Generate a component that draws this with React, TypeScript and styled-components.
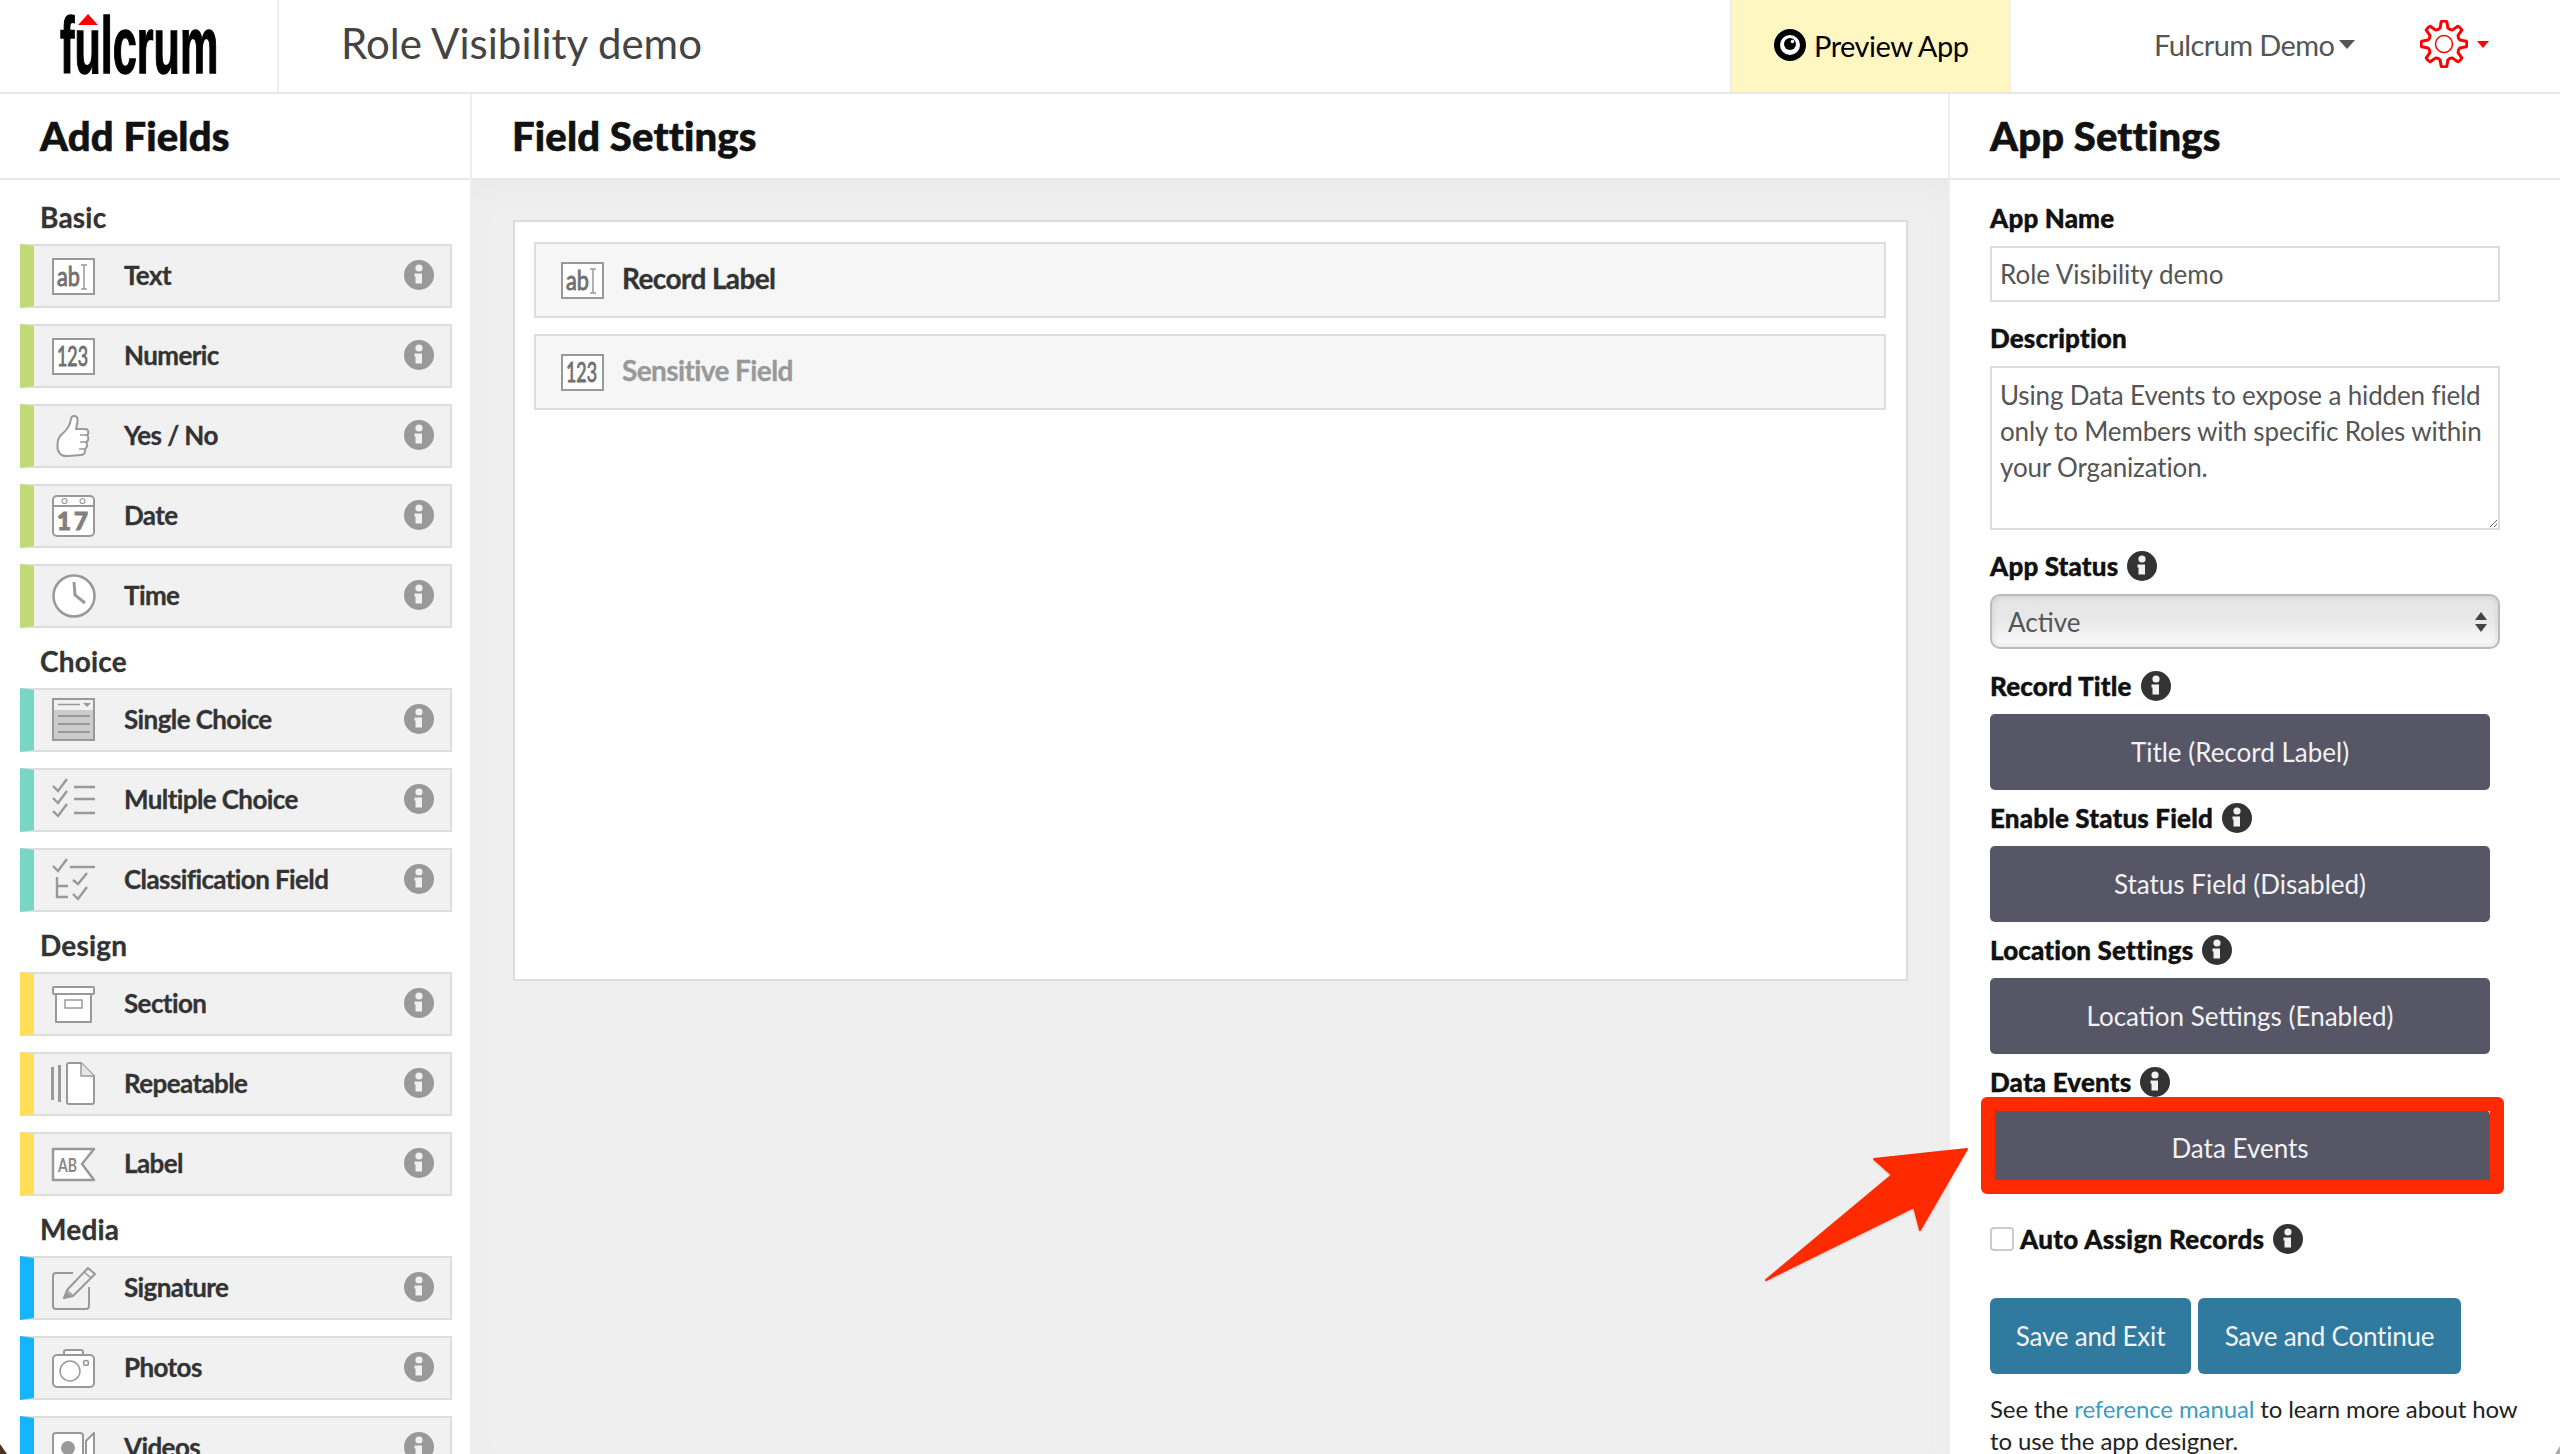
import React from 'react';
import styled, { createGlobalStyle } from 'styled-components';

const GlobalStyle = createGlobalStyle`
  html, body {
    margin: 0;
    height: 100%;
    overflow: hidden;
    background: #fff;
    font-family: Lato, "Open Sans", sans-serif;
    color: #333;
  }
  * { box-sizing: border-box; }
`;

const GRAY = '#999';

const boxed = (children: React.ReactNode) => (
  <>
    <rect x="1" y="5" width="41" height="35" fill="#fff" stroke={GRAY} strokeWidth="2" />
    {children}
  </>
);

const narrowText = {
  fontFamily: 'Lato, sans-serif',
  lengthAdjust: 'spacingAndGlyphs' as const,
  fill: '#707070',
  stroke: '#707070',
  strokeWidth: 0.9,
};

const icons: Record<string, React.ReactNode> = {
  text: boxed(
    <>
      <text x="5" y="32" fontSize="27" textLength="23" {...narrowText}>ab</text>
      <path d="M32 11v24M29 11h6M29 35h6" fill="none" stroke={GRAY} strokeWidth="1.5" />
    </>,
  ),
  numeric: boxed(
    <text x="5" y="32" fontSize="26" textLength="31" {...narrowText}>123</text>,
  ),
  yesno: (
    <g fill="#fff" stroke={GRAY} strokeWidth="2" strokeLinejoin="round">
      <path d="M9 21C14 17 18 13 19 5C19.5 1 25 1 25.5 5C26 10 24 13 24 15L33 15C37 15 37 20 35 21C37 23 37 27 34 28C36 30 35 34 33 35C34 38 32 41 29 41L16 42C8 43 5 37 5.5 31C5.5 27 6 24 9 21Z" />
      <path d="M28 21h7M28 28h6M27 35h6" fill="none" strokeWidth="1.5" />
    </g>
  ),
  date: (
    <>
      <rect x="1" y="2" width="41" height="40" rx="4" fill="#fff" stroke={GRAY} strokeWidth="2" />
      <path d="M1 12h41" stroke={GRAY} strokeWidth="2" />
      <circle cx="12.5" cy="7" r="2.5" fill="none" stroke={GRAY} strokeWidth="1.2" />
      <circle cx="30.5" cy="7" r="2.5" fill="none" stroke={GRAY} strokeWidth="1.2" />
      <text x="22" y="36" fontSize="24" fontWeight="900" textAnchor="middle" fontFamily="Lato, sans-serif" fill="#808080" stroke="#808080" strokeWidth="1" letterSpacing="3">17</text>
    </>
  ),
  time: (
    <>
      <circle cx="22" cy="22" r="20.5" fill="#fff" stroke={GRAY} strokeWidth="2.5" />
      <path d="M22 8L23 21L33 29" fill="none" stroke={GRAY} strokeWidth="3" />
    </>
  ),
  single: (
    <>
      <rect x="1" y="1" width="41" height="41" fill="#ccc" stroke={GRAY} strokeWidth="2" />
      <rect x="2" y="2" width="39" height="10" fill="#f1f1f1" />
      <path d="M6 6.5h22" stroke={GRAY} strokeWidth="1.5" />
      <path d="M31 5h8l-4 4z" fill={GRAY} />
      <path d="M6 18h32M6 26h32M6 34h32" stroke="#888" strokeWidth="1.5" />
    </>
  ),
  multiple: (
    <g fill="none" stroke={GRAY} strokeWidth="2.4">
      <path d="M1 8l5 5 9-12M1 20l5 5 9-12M1 33l5 5 9-12" />
      <path d="M22 9h21M22 21h21M22 35h21" />
    </g>
  ),
  classification: (
    <g fill="none" stroke={GRAY} strokeWidth="2.4">
      <path d="M1 8l5 5 9-12" />
      <path d="M18 9h25" />
      <path d="M5 19v20h11M5 28h11" />
      <path d="M21 22l5 4 9-11M21 36l5 5 9-12" />
    </g>
  ),
  section: (
    <g fill="#fff" stroke={GRAY} strokeWidth="2" strokeLinejoin="round">
      <rect x="4" y="12" width="35" height="28" />
      <rect x="1" y="5" width="41" height="7" rx="1" />
      <rect x="13" y="18" width="17" height="8" fill="none" strokeWidth="1.5" />
    </g>
  ),
  repeatable: (
    <g stroke={GRAY} strokeWidth="2" strokeLinejoin="round">
      <path d="M0.5 5v33" fill="none" strokeWidth="3" />
      <path d="M7.5 3v37" fill="none" strokeWidth="3" />
      <path d="M15 3a2 2 0 0 1 2-2h12l13 13v26a2 2 0 0 1-2 2H17a2 2 0 0 1-2-2z" fill="#fff" />
      <path d="M29 1v13h13" fill="#e6e6e6" strokeWidth="1.5" />
    </g>
  ),
  label: (
    <>
      <path d="M1 7H42L30 22L42 38H1Z" fill="#fff" stroke={GRAY} strokeWidth="2.5" strokeLinejoin="round" />
      <text x="6" y="30" fontSize="19" fontWeight="700" textLength="19" {...narrowText} fill="#888" strokeWidth="0">AB</text>
    </>
  ),
  signature: (
    <g fill="none" stroke={GRAY} strokeWidth="2" strokeLinejoin="round">
      <path d="M21 7H4a3 3 0 0 0-3 3v30a3 3 0 0 0 3 3h30a3 3 0 0 0 3-3V21" />
      <path d="M12 32L15 24L36 2L43 8L21 30Z" fill="#f1f1f1" />
      <path d="M32 6L39 12M15 24L21 30" strokeWidth="1.5" />
      <path d="M12 32L15 27L18 30Z" fill={GRAY} />
    </g>
  ),
  photos: (
    <g fill="#fff" stroke={GRAY} strokeWidth="2" strokeLinejoin="round">
      <path d="M12 9V6a2 2 0 0 1 2-2h15a2 2 0 0 1 2 2v3" />
      <rect x="1" y="9" width="41" height="32" rx="4" />
      <circle cx="18" cy="25" r="10" strokeWidth="1.5" />
      <circle cx="34" cy="17" r="2.5" strokeWidth="1.5" />
    </g>
  ),
  videos: (
    <g stroke={GRAY} strokeWidth="2" strokeLinejoin="round">
      <rect x="1" y="7" width="30" height="30" rx="3" fill="#fff" />
      <path d="M34 15L42 7V37L34 29Z" fill="#fff" />
      <circle cx="16" cy="22" r="6" fill={GRAY} />
    </g>
  ),
};

function FieldIcon({ name }: { name: string }) {
  return (
    <IconSvg viewBox="0 0 44 44">{icons[name]}</IconSvg>
  );
}

function InfoIcon({ dark }: { dark?: boolean }) {
  return (
    <InfoSvg viewBox="0 0 30 30">
      <circle cx="15" cy="15" r="15" fill={dark ? '#333' : '#999'} />
      <circle cx="15" cy="8" r="3.6" fill="#f1f1f1" />
      <path d="M10.5 13.500h7.500v10h-6.500v-7h-1z" fill="#f1f1f1" />
    </InfoSvg>
  );
}

// 8 tooth outline for the settings cog
const gearPath = (() => {
  const pts: string[] = [];
  const teeth = 8;
  for (let i = 0; i < teeth; i++) {
    const a = (i / teeth) * Math.PI * 2 - Math.PI / 2;
    const step = (Math.PI * 2) / teeth;
    const at = (r: number, t: number) =>
      `${(24 + Math.cos(a + t) * r).toFixed(1)} ${(24 + Math.sin(a + t) * r).toFixed(1)}`;
    pts.push(`${i === 0 ? 'M' : 'L'}${at(16.5, -step * 0.3)}`);
    pts.push(`L${at(22.5, -step * 0.16)}`);
    pts.push(`Q${at(23.5, 0)} ${at(22.5, step * 0.16)}`);
    pts.push(`L${at(16.5, step * 0.3)}`);
    pts.push(`Q${at(15, step * 0.5)} ${at(16.5, step * 0.7)}`);
  }
  return pts.join(' ') + ' Z';
})();

const groups = [
  {
    title: 'Basic',
    color: '#c0db75',
    items: [
      ['text', 'Text'],
      ['numeric', 'Numeric'],
      ['yesno', 'Yes / No'],
      ['date', 'Date'],
      ['time', 'Time'],
    ],
  },
  {
    title: 'Choice',
    color: '#76d7c4',
    items: [
      ['single', 'Single Choice'],
      ['multiple', 'Multiple Choice'],
      ['classification', 'Classification Field'],
    ],
  },
  {
    title: 'Design',
    color: '#ffdf57',
    items: [
      ['section', 'Section'],
      ['repeatable', 'Repeatable'],
      ['label', 'Label'],
    ],
  },
  {
    title: 'Media',
    color: '#14b4ff',
    items: [
      ['signature', 'Signature'],
      ['photos', 'Photos'],
      ['videos', 'Videos'],
    ],
  },
];

export default function App() {
  return (
    <Page>
      <GlobalStyle />
      <TopBar>
        <LogoCell>
          <Logo>
            <LogoWord>fulcrum</LogoWord>
            <LogoCaret viewBox="0 0 20 11">
              <path d="M10 0L20 11H0Z" fill="#f00" />
            </LogoCaret>
          </Logo>
        </LogoCell>
        <AppTitle>Role Visibility demo</AppTitle>
        <PreviewCell>
          <svg width="32" height="32" viewBox="0 0 32 32">
            <circle cx="16" cy="16" r="13" fill="#fff" stroke="#000" strokeWidth="6" />
            <circle cx="16" cy="15" r="6" fill="#000" />
            <circle cx="18.500" cy="12.500" r="1.800" fill="#fff" />
          </svg>
          Preview App
        </PreviewCell>
        <UserName>
          Fulcrum Demo
          <Caret $size={8} $color="#555" />
        </UserName>
        <GearCell>
          <svg width="48" height="48" viewBox="0 0 48 48">
            <path d={gearPath} fill="none" stroke="#f00" strokeWidth="3" strokeLinejoin="round" />
            <circle cx="24" cy="24" r="8.500" fill="none" stroke="#f00" strokeWidth="1.500" />
          </svg>
          <Caret $size={6} $color="#f00" />
        </GearCell>
      </TopBar>

      <Columns>
        <Sidebar>
          <PanelHeader>Add Fields</PanelHeader>
          <SidebarBody>
            {groups.map((group) => (
              <div key={group.title}>
                <GroupTitle>{group.title}</GroupTitle>
                {group.items.map(([icon, label]) => (
                  <FieldRow key={label} $color={group.color}>
                    <FieldIcon name={icon} />
                    <FieldName>{label}</FieldName>
                    <InfoSlot>
                      <InfoIcon />
                    </InfoSlot>
                  </FieldRow>
                ))}
              </div>
            ))}
          </SidebarBody>
        </Sidebar>

        <Center>
          <PanelHeader>Field Settings</PanelHeader>
          <Canvas>
            <FormCard>
              <CardRow>
                <FieldIcon name="text" />
                <CardRowName>Record Label</CardRowName>
              </CardRow>
              <CardRow>
                <FieldIcon name="numeric" />
                <CardRowName $muted>Sensitive Field</CardRowName>
              </CardRow>
            </FormCard>
          </Canvas>
        </Center>

        <Settings>
          <PanelHeader>App Settings</PanelHeader>
          <SettingsBody>
            <SettingLabel>App Name</SettingLabel>
            <TextInput defaultValue="Role Visibility demo" />
            <SettingLabel>Description</SettingLabel>
            <TextArea defaultValue="Using Data Events to expose a hidden field only to Members with specific Roles within your Organization." />
            <SettingLabel>
              App Status <InfoIcon dark />
            </SettingLabel>
            <SelectWrap>
              <StatusSelect defaultValue="Active">
                <option>Active</option>
                <option>Inactive</option>
              </StatusSelect>
              <SelectArrows viewBox="0 0 12 20">
                <path d="M6 0L12 8H0ZM6 20L0 12H12Z" fill="#444" />
              </SelectArrows>
            </SelectWrap>
            <SettingLabel>
              Record Title <InfoIcon dark />
            </SettingLabel>
            <DarkButton>Title (Record Label)</DarkButton>
            <SettingLabel>
              Enable Status Field <InfoIcon dark />
            </SettingLabel>
            <DarkButton>Status Field (Disabled)</DarkButton>
            <SettingLabel>
              Location Settings <InfoIcon dark />
            </SettingLabel>
            <DarkButton>Location Settings (Enabled)</DarkButton>
            <SettingLabel>
              Data Events <InfoIcon dark />
            </SettingLabel>
            <HighlightWrap>
              <DarkButton>Data Events</DarkButton>
              <Highlight />
            </HighlightWrap>
            <CheckRow>
              <CheckBox type="checkbox" />
              Auto Assign Records <InfoIcon dark />
            </CheckRow>
            <SaveRow>
              <SaveButton $width={201}>Save and Exit</SaveButton>
              <SaveButton $width={263}>Save and Continue</SaveButton>
            </SaveRow>
            <HelpText>
              See the <HelpLink href="#">reference manual</HelpLink> to learn more about how to use the app designer.
            </HelpText>
          </SettingsBody>
        </Settings>
      </Columns>

      <Arrow viewBox="0 0 210 140">
        <path
          d="M205 9L112 19L130 35L4 140L152 67L158 90Z"
          fill="#ff2a00"
          stroke="#ff2a00"
          strokeWidth="2"
          strokeLinejoin="round"
        />
      </Arrow>
      <CornerLeft />
      <CornerRight />
    </Page>
  );
}

const Page = styled.div`
  position: relative;
  display: flex;
  flex-direction: column;
  width: 2560px;
  height: 1454px;
  overflow: hidden;
`;

const TopBar = styled.header`
  display: flex;
  align-items: stretch;
  height: 94px;
  flex: none;
  border-bottom: 2px solid #e8e8e8;
`;

const LogoCell = styled.div`
  width: 279px;
  flex: none;
  padding-left: 60px;
  border-right: 2px solid #eee;
`;

const Logo = styled.div`
  position: relative;
  width: 156px;
  height: 92px;
`;

const LogoWord = styled.span`
  display: block;
  font-family: "Liberation Sans", Arial, sans-serif;
  font-weight: 700;
  font-size: 80px;
  line-height: 92px;
  color: #000;
  transform: scaleX(0.54);
  transform-origin: 0 50%;
  -webkit-text-stroke: 1.500px #000;
`;

const LogoCaret = styled.svg`
  position: absolute;
  left: 18px;
  top: 14px;
  width: 20px;
  height: 11px;
`;

const AppTitle = styled.div`
  flex: 1;
  padding-left: 62px;
  font-size: 42px;
  line-height: 86px;
  color: #444;
`;

const PreviewCell = styled.div`
  width: 281px;
  flex: none;
  display: flex;
  align-items: center;
  gap: 8px;
  padding: 0 0 2px 42px;
  font-size: 29px;
  letter-spacing: -0.5px;
  color: #000;
  background: #fff7c2;
  border-left: 2px solid #eee;
  border-right: 2px solid #eee;
`;

const UserName = styled.div`
  display: flex;
  align-items: center;
  gap: 5px;
  width: 409px;
  padding: 0 0 4px 143px;
  font-size: 29px;
  letter-spacing: -0.6px;
  color: #555;
  flex: none;
`;

const Caret = styled.span<{ $size: number; $color: string }>`
  display: inline-block;
  border-left: ${(p) => p.$size}px solid transparent;
  border-right: ${(p) => p.$size}px solid transparent;
  border-top: ${(p) => p.$size + 1}px solid ${(p) => p.$color};
`;

const GearCell = styled.div`
  display: flex;
  align-items: center;
  gap: 9px;
  width: 140px;
  flex: none;
  padding-bottom: 4px;
`;

const Columns = styled.div`
  display: flex;
  flex: 1;
  min-height: 0;
`;

const PanelHeader = styled.h2`
  flex: none;
  height: 86px;
  margin: 0;
  padding-left: 40px;
  font-size: 40px;
  font-weight: 900;
  letter-spacing: 0.15px;
  -webkit-text-stroke: 0.6px #111;
  line-height: 84px;
  color: #111;
  background: #fff;
  border-bottom: 2px solid #e8e8e8;
`;

const Sidebar = styled.aside`
  display: flex;
  flex-direction: column;
  flex: none;
  width: 472px;
  border-right: 2px solid #eee;
`;

const SidebarBody = styled.div`
  flex: 1;
  padding: 20px 18px 0 20px;
  min-height: 0;
`;

const GroupTitle = styled.h3`
  height: 44px;
  margin: 0;
  padding-left: 20px;
  font-size: 28px;
  font-weight: 700;
  letter-spacing: 0.2px;
  -webkit-text-stroke: 0.3px #333;
  line-height: 34px;
  color: #333;
`;

const FieldRow = styled.div<{ $color: string }>`
  display: flex;
  align-items: center;
  height: 64px;
  margin-bottom: 16px;
  padding-left: 18px;
  background: #f1f1f1;
  border: 2px solid #ddd;
  border-left: 14px solid ${(p) => p.$color};
`;

const IconSvg = styled.svg`
  display: block;
  flex: none;
  width: 44px;
  height: 44px;
  overflow: visible;
`;

const InfoSvg = styled.svg`
  display: block;
  flex: none;
  width: 30px;
  height: 30px;
`;

const FieldName = styled.span`
  margin-left: 28px;
  padding-bottom: 2px;
  font-size: 26px;
  font-weight: 700;
  letter-spacing: -0.6px;
  -webkit-text-stroke: 0.3px #333;
  color: #333;
`;

const InfoSlot = styled.span`
  margin-left: auto;
  margin-right: 16px;
  padding-bottom: 2px;
`;

const Center = styled.main`
  display: flex;
  flex-direction: column;
  flex: 1;
  min-width: 0;
`;

const Canvas = styled.div`
  flex: 1;
  padding: 40px 40px 40px 41px;
  background: #efefef;
  box-shadow: inset 0 16px 30px -8px #e9e9e9;
`;

const FormCard = styled.div`
  height: 761px;
  padding: 20px 20px 20px 19px;
  background: #fff;
  border: 2px solid #ddd;
`;

const CardRow = styled.div`
  display: flex;
  align-items: center;
  height: 76px;
  margin-bottom: 16px;
  padding-left: 25px;
  background: #f6f6f6;
  border: 2px solid #ddd;
`;

const CardRowName = styled.span<{ $muted?: boolean }>`
  margin-left: 17px;
  padding-bottom: 4px;
  font-size: 28px;
  font-weight: 700;
  letter-spacing: -0.6px;
  -webkit-text-stroke: 0.3px ${(p) => (p.$muted ? '#999' : '#333')};
  color: ${(p) => (p.$muted ? '#999' : '#333')};
`;

const Settings = styled.aside`
  display: flex;
  flex-direction: column;
  flex: none;
  width: 612px;
  border-left: 2px solid #eee;
`;

const SettingsBody = styled.div`
  flex: 1;
  padding: 20px 0 0 40px;
  min-height: 0;
`;

const SettingLabel = styled.label`
  display: flex;
  align-items: center;
  gap: 9px;
  height: 36px;
  margin-bottom: 10px;
  font-size: 26px;
  font-weight: 900;
  letter-spacing: 0.15px;
  -webkit-text-stroke: 0.4px #111;
  color: #111;
`;

const TextInput = styled.input`
  display: block;
  width: 510px;
  height: 56px;
  margin-bottom: 18px;
  padding: 0 8px;
  border: 2px solid #ddd;
  border-radius: 0;
  outline: none;
  font-family: Lato, sans-serif;
  font-size: 26px;
  color: #555;
`;

const TextArea = styled.textarea`
  display: block;
  width: 510px;
  height: 164px;
  margin: 0 0 18px;
  padding: 9px 8px;
  border: 2px solid #ddd;
  border-radius: 0;
  outline: none;
  font-family: Lato, sans-serif;
  font-size: 26px;
  letter-spacing: -0.15px;
  line-height: 36px;
  color: #555;
`;

const SelectWrap = styled.div`
  position: relative;
  width: 510px;
  height: 55px;
  margin-bottom: 19px;
`;

const StatusSelect = styled.select`
  display: block;
  width: 100%;
  height: 100%;
  padding: 0 16px;
  appearance: none;
  border: 2px solid #bbb;
  border-radius: 10px;
  outline: none;
  background: linear-gradient(#e4e4e4, #e9e9e9 50%, #fbfbfb);
  box-shadow: inset 0 0 6px rgba(0, 0, 0, 0.12);
  font-family: Lato, sans-serif;
  font-size: 26px;
  color: #555;
`;

const SelectArrows = styled.svg`
  position: absolute;
  right: 13px;
  top: 18px;
  width: 12px;
  height: 20px;
`;

const DarkButton = styled.button`
  display: block;
  width: 500px;
  height: 76px;
  margin-bottom: 10px;
  border: 0;
  border-radius: 5px;
  background: #565667;
  font-family: Lato, sans-serif;
  font-size: 26px;
  color: #f2f2f2;
`;

const HighlightWrap = styled.div`
  position: relative;
  width: 500px;
`;

const Highlight = styled.div`
  position: absolute;
  left: -9px;
  right: -14px;
  top: -13px;
  bottom: -8px;
  border: 14px solid #ff2a00;
  border-radius: 6px;
`;

const CheckRow = styled.label`
  display: flex;
  align-items: center;
  height: 36px;
  margin-top: 35px;
  font-size: 26px;
  font-weight: 900;
  letter-spacing: 0.3px;
  -webkit-text-stroke: 0.4px #111;
  color: #111;

  svg {
    margin-left: 9px;
  }
`;

const CheckBox = styled.input`
  width: 24px;
  height: 24px;
  margin: 0 6px 0 0;
  appearance: none;
  background: #fff;
  border: 2px solid #ccc;
  border-radius: 4px;
`;

const SaveRow = styled.div`
  display: flex;
  gap: 7px;
  margin-top: 41px;
`;

const SaveButton = styled.button<{ $width: number }>`
  width: ${(p) => p.$width}px;
  height: 76px;
  border: 0;
  border-radius: 6px;
  background: #30799f;
  font-family: Lato, sans-serif;
  font-size: 26px;
  letter-spacing: -0.2px;
  color: #f4f4f4;
`;

const HelpText = styled.p`
  width: 545px;
  margin: 19px 0 0;
  font-size: 24px;
  letter-spacing: -0.12px;
  line-height: 32px;
  color: #222;
`;

const HelpLink = styled.a`
  color: #3b9cc4;
  text-decoration: none;
`;

const Arrow = styled.svg`
  position: absolute;
  left: 1762px;
  top: 1140px;
  width: 210px;
  height: 140px;
  overflow: visible;
  filter: drop-shadow(0 1px 1px rgba(0, 0, 0, 0.15));
`;

const CornerLeft = styled.div`
  position: absolute;
  left: 0;
  bottom: 0;
  width: 7px;
  height: 10px;
  background: #4a3420;
  clip-path: polygon(0 0, 100% 100%, 0 100%);
`;

const CornerRight = styled.div`
  position: absolute;
  right: 0;
  bottom: 0;
  width: 5px;
  height: 8px;
  background: #aaa;
  clip-path: polygon(100% 0, 100% 100%, 0 100%);
`;
